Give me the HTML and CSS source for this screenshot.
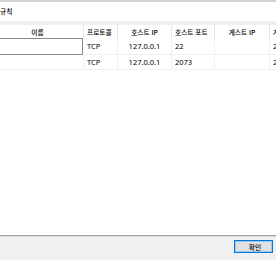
FILE: index.html
```html
<!DOCTYPE html>
<html lang="ko">
<head>
    <meta charset="UTF-8">
    <meta name="viewport" content="width=device-width, initial-scale=1.0">
    <title>규칙</title>
    <link rel="stylesheet" href="styles.css">
</head>
<body>
    <div class="window">
        <div class="edge"></div>
        <div class="title"><span class="ko">규칙</span></div>
        <div class="band"></div>

        <div class="rules">
            <div class="cell head first"><span class="ko">이름</span></div>
            <div class="cell head left"><span class="ko">프로토콜</span></div>
            <div class="cell head"><span class="ko">호스트 IP</span></div>
            <div class="cell head left"><span class="ko">호스트 포트</span></div>
            <div class="cell head"><span class="ko">게스트 IP</span></div>
            <div class="cell head left"><span class="ko">게스트 포트</span></div>

            <div class="cell editing"></div>
            <div class="cell left">TCP</div>
            <div class="cell">127.0.0.1</div>
            <div class="cell left">22</div>
            <div class="cell"></div>
            <div class="cell left">22</div>

            <div class="cell first"></div>
            <div class="cell left">TCP</div>
            <div class="cell">127.0.0.1</div>
            <div class="cell left">2073</div>
            <div class="cell"></div>
            <div class="cell left">22</div>
        </div>

        <div class="empty"></div>

        <div class="footer">
            <button type="button" class="ok"><span class="ko">확인</span></button>
        </div>
    </div>
</body>
</html>
```

FILE: styles.css
```css
* {
    margin: 0;
    padding: 0;
    box-sizing: border-box;
}

body {
    font-family: "Noto Sans", "Noto Sans CJK KR", sans-serif;
    font-size: 7.5px;
    color: #000;
    background-color: #fff;
    width: 276px;
    height: 260px;
    overflow: hidden;
}

.ko {
    font-family: "Noto Sans CJK KR", sans-serif;
    font-size: 6.7px;
    font-weight: 500;
    white-space: pre;
}

.window {
    display: flex;
    flex-direction: column;
    height: 260px;
}

.edge {
    height: 2px;
    background-color: #d2d2d2;
}

.title {
    height: 19px;
    display: flex;
    align-items: center;
    padding-bottom: 1px;
}

.band {
    height: 4px;
    background-color: #f0f0f0;
}

.rules {
    display: grid;
    grid-template-columns: 84px 34px 54px 43px 55px 60px;
    grid-template-rows: 13px 17px 15px;
    width: 276px;
    overflow: hidden;
}

.cell {
    display: flex;
    align-items: center;
    justify-content: center;
    white-space: nowrap;
    overflow: hidden;
    border-right: 1px solid #f0f0f0;
    border-bottom: 1px solid #f0f0f0;
}

.cell.left {
    justify-content: flex-start;
    padding-left: 3px;
}

.cell.head {
    border-right-color: #e5e5e5;
    border-bottom: none;
}

.cell.head.first {
    padding-right: 8px;
}

.cell.editing {
    border: 1px solid #8a8a8a;
    border-left: none;
    margin-right: 1px;
    background-color: #fff;
}

.empty {
    flex: 1;
    border-bottom: 1px solid #a0a0a0;
}

.footer {
    height: 24px;
    background-color: #f0f0f0;
    border-top: 1px solid #dcdcdc;
    display: flex;
    justify-content: flex-end;
    align-items: flex-start;
    padding-top: 3px;
    padding-right: 3px;
}

.ok {
    width: 39px;
    height: 13px;
    border: 1px solid #0078d7;
    box-shadow: inset 0 0 0 1px #9fc6e8;
    background-color: #e1e1e1;
    color: #000;
    display: flex;
    align-items: center;
    justify-content: center;
    padding-left: 3px;
}
```
